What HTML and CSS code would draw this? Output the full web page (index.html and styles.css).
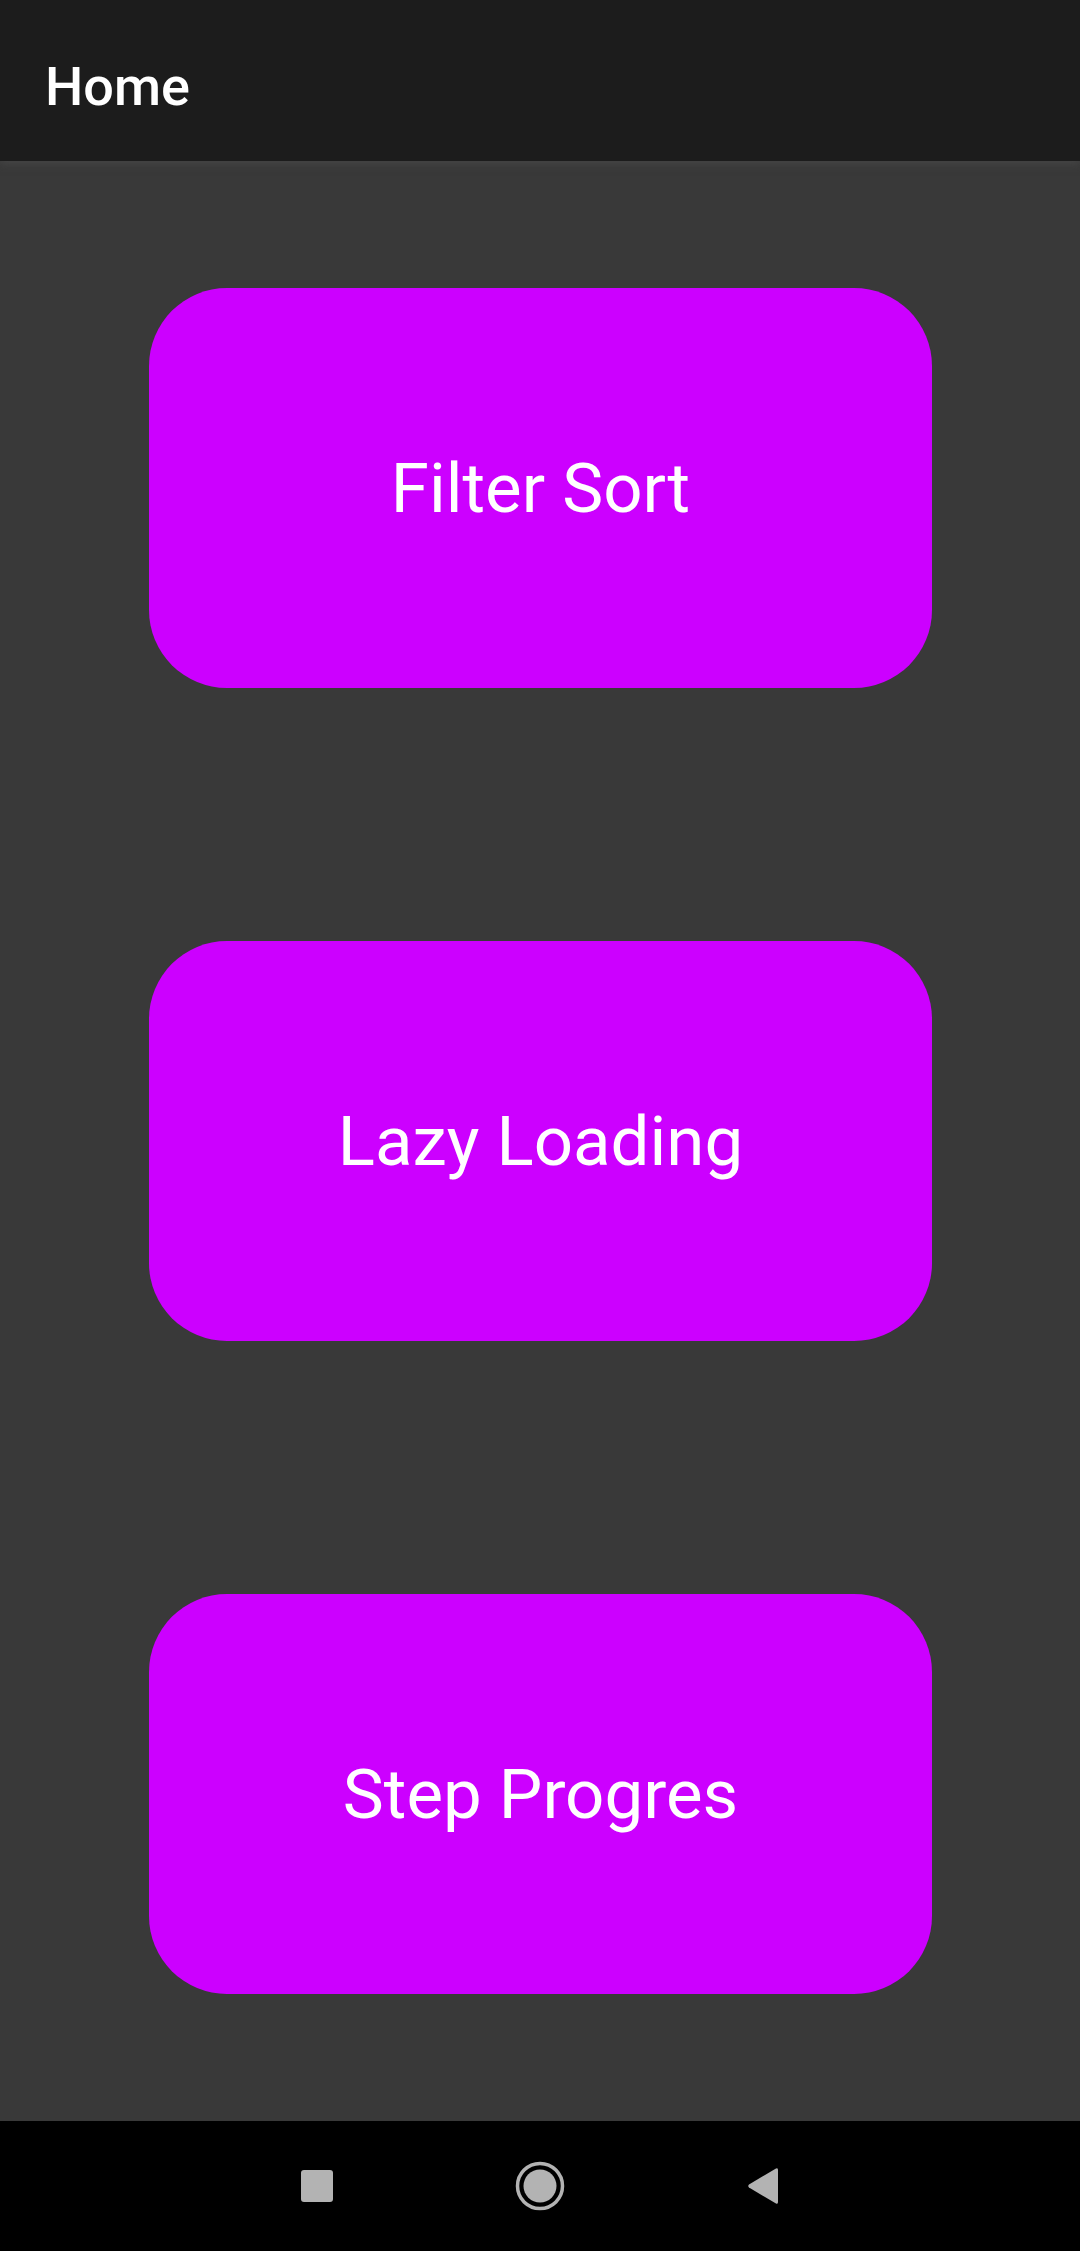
FILE: index.html
```html
<!DOCTYPE html>
<html>
<head>
<meta charset="utf-8">
<link rel="stylesheet" href="styles.css">
</head>
<body>
<div class="screen">
  <header class="topbar"><span class="title">Home</span></header>
  <main class="content">
    <button class="card">Filter Sort</button>
    <button class="card">Lazy Loading</button>
    <button class="card">Step Progres</button>
  </main>
  <nav class="navbar">
    <svg class="nav-icon" width="32" height="32" viewBox="0 0 32 32"><rect x="0" y="0" width="32" height="32" rx="3" fill="#b3b3b3"/></svg>
    <svg class="nav-icon" width="50" height="50" viewBox="0 0 50 50"><circle cx="25" cy="25" r="22.5" fill="none" stroke="#b3b3b3" stroke-width="3.5"/><circle cx="25" cy="25" r="16.5" fill="#b3b3b3"/></svg>
    <svg class="nav-icon" width="32" height="38" viewBox="0 0 32 38"><path d="M29 1.5 Q31 0.5 31 3 L31 35 Q31 37.5 29 36.5 L2 20.5 Q0.5 19 2 17.5 Z" fill="#b3b3b3"/></svg>
  </nav>
</div>
</body>
</html>
```
FILE: styles.css
```css
html, body {
  margin: 0;
  padding: 0;
}
body {
  width: 1080px;
  height: 2251px;
  overflow: hidden;
  background: #393939;
  font-family: Roboto, "Noto Sans", "Liberation Sans", sans-serif;
}
.screen {
  display: flex;
  flex-direction: column;
  height: 2251px;
}
.topbar {
  height: 161px;
  flex: 0 0 161px;
  background: #1c1c1c;
  display: flex;
  align-items: center;
  padding-left: 45px;
  box-sizing: border-box;
  position: relative;
  z-index: 1;
  box-shadow: 0 3px 8px rgba(80, 80, 80, 0.55);
}
.title {
  color: #ffffff;
  font-size: 54px;
  font-weight: 500;
  margin-top: 12px;
}
.content {
  flex: 1 1 auto;
  display: flex;
  flex-direction: column;
  align-items: center;
  padding-top: 127px;
  gap: 253px;
  background: #393939;
}
.card {
  width: 783px;
  height: 400px;
  border: none;
  border-radius: 78px;
  background: #cc00ff;
  color: #ffffff;
  font-family: Roboto, "Noto Sans", "Liberation Sans", sans-serif;
  font-size: 69px;
  font-weight: 400;
  padding: 0;
  margin-left: 1px;
}
.navbar {
  height: 130px;
  flex: 0 0 130px;
  background: #000000;
  display: flex;
  align-items: center;
  justify-content: center;
  gap: 182px;
  box-sizing: border-box;
}
.nav-icon {
  display: block;
}
```
